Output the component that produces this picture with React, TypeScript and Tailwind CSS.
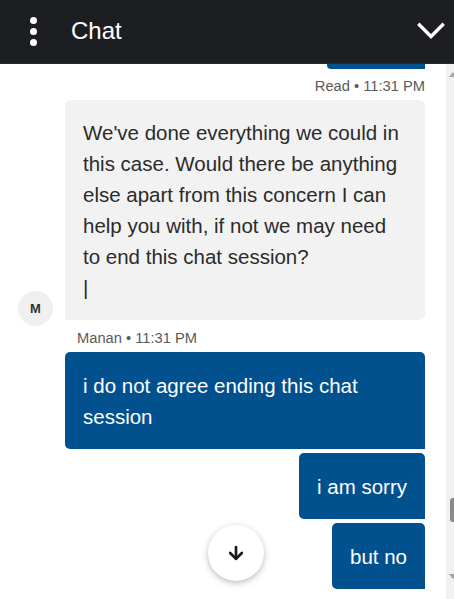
import { ArrowDown } from "lucide-react"

const font = "font-['Liberation_Sans',Arial,sans-serif]"

function Header() {
    return (
        <div className="flex items-center h-[64px] bg-[#1d1e21] border-b border-[#2a2b2e] shrink-0">
            <div className="flex flex-col items-center gap-[4.5px] w-[66px] pl-[1px]">
                <span className="block w-[6.5px] h-[6.5px] rounded-full bg-white" />
                <span className="block w-[6.5px] h-[6.5px] rounded-full bg-white" />
                <span className="block w-[6.5px] h-[6.5px] rounded-full bg-white" />
            </div>
            <span className="ml-[5px] text-white text-[24px] leading-none pb-[2px]">Chat</span>
            <svg className="ml-auto mr-[9px] mb-[2px]" width="28" height="18" viewBox="0 0 28 18" fill="none">
                <path d="M2.5 3 L14 14.5 L25.5 3" stroke="white" strokeWidth="3.4" strokeLinecap="square" />
            </svg>
        </div>
    )
}

function Scrollbar() {
    return (
        <div className="w-[8px] bg-[#f1f1f1] flex flex-col items-end relative">
            {/* up arrow */}
            <div className="mt-[8px] w-0 h-0 border-l-[4px] border-r-[4px] border-b-[5px] border-l-transparent border-r-transparent border-b-[#a3a3a3] mr-[-3px]" />
            {/* thumb */}
            <div className="absolute top-[434px] right-0 w-[4px] h-[24px] rounded-l-[3px] bg-[#8a8a8a]" />
            {/* down arrow */}
            <div className="mt-auto mb-[20px] w-0 h-0 border-l-[4px] border-r-[4px] border-t-[5px] border-l-transparent border-r-transparent border-t-[#a3a3a3] mr-[-3px]" />
        </div>
    )
}

function Meta({ children, right }: { children: string; right?: boolean }) {
    return (
        <div className={`text-[14.7px] leading-[20px] text-[#5a5a5a] ${right ? 'text-right' : 'pl-[12px]'}`}>{children}</div>
    )
}

function OutBubble({ children }: { children: string }) {
    return (
        <div className="self-end max-w-full bg-[#02518f] text-white text-[20.5px] leading-[31px] px-[18px] py-[17.5px] rounded-t-[5px] rounded-bl-[5px]">
            {children}
        </div>
    )
}

export default function App() {
    return (
        <div className={`w-[454px] h-[599px] flex flex-col bg-white overflow-hidden ${font}`}>
            <Header />
            <div className="flex flex-1 min-h-0 relative">
                <div className="flex-1 flex flex-col pl-[65px] pr-[21px]">
                    {/* end of the previous bubble */}
                    <div className="self-end w-[98px] h-[5px] bg-[#02518f] rounded-bl-[4px]" />
                    <div className="mt-[7px]">
                        <Meta right>Read • 11:31 PM</Meta>
                    </div>

                    {/* agent message */}
                    <div className="relative mt-[4px]">
                        <div className="absolute left-[-47px] bottom-[-6px] w-[35px] h-[35px] rounded-full bg-[#f0f0f0] flex items-center justify-center text-[13px] font-bold text-[#333]">
                            M
                        </div>
                        <div className="bg-[#f2f2f2] text-[#2b2b2b] text-[20.5px] leading-[31px] px-[18px] py-[17px] rounded-t-[6px] rounded-br-[6px]">
                            <p>We've done everything we could in this case. Would there be anything else apart from this concern I can help you with, if not we may need to end this chat session?</p>
                            <p className="font-light">|</p>
                        </div>
                    </div>
                    <div className="mt-[8px]">
                        <Meta>Manan • 11:31 PM</Meta>
                    </div>

                    <div className="flex flex-col gap-[4px] mt-[4px]">
                        <OutBubble>i do not agree ending this chat session</OutBubble>
                        <OutBubble>i am sorry</OutBubble>
                        <OutBubble>but no</OutBubble>
                    </div>
                </div>
                <Scrollbar />

                {/* scroll to bottom */}
                <button className="absolute left-[208px] top-[461px] w-[56px] h-[56px] rounded-full bg-white shadow-[0_2px_6px_rgba(60,60,40,0.35)] flex items-center justify-center">
                    <ArrowDown size={20} strokeWidth={3.2} color="#1a1a1a" />
                </button>
            </div>
        </div>
    )
}
